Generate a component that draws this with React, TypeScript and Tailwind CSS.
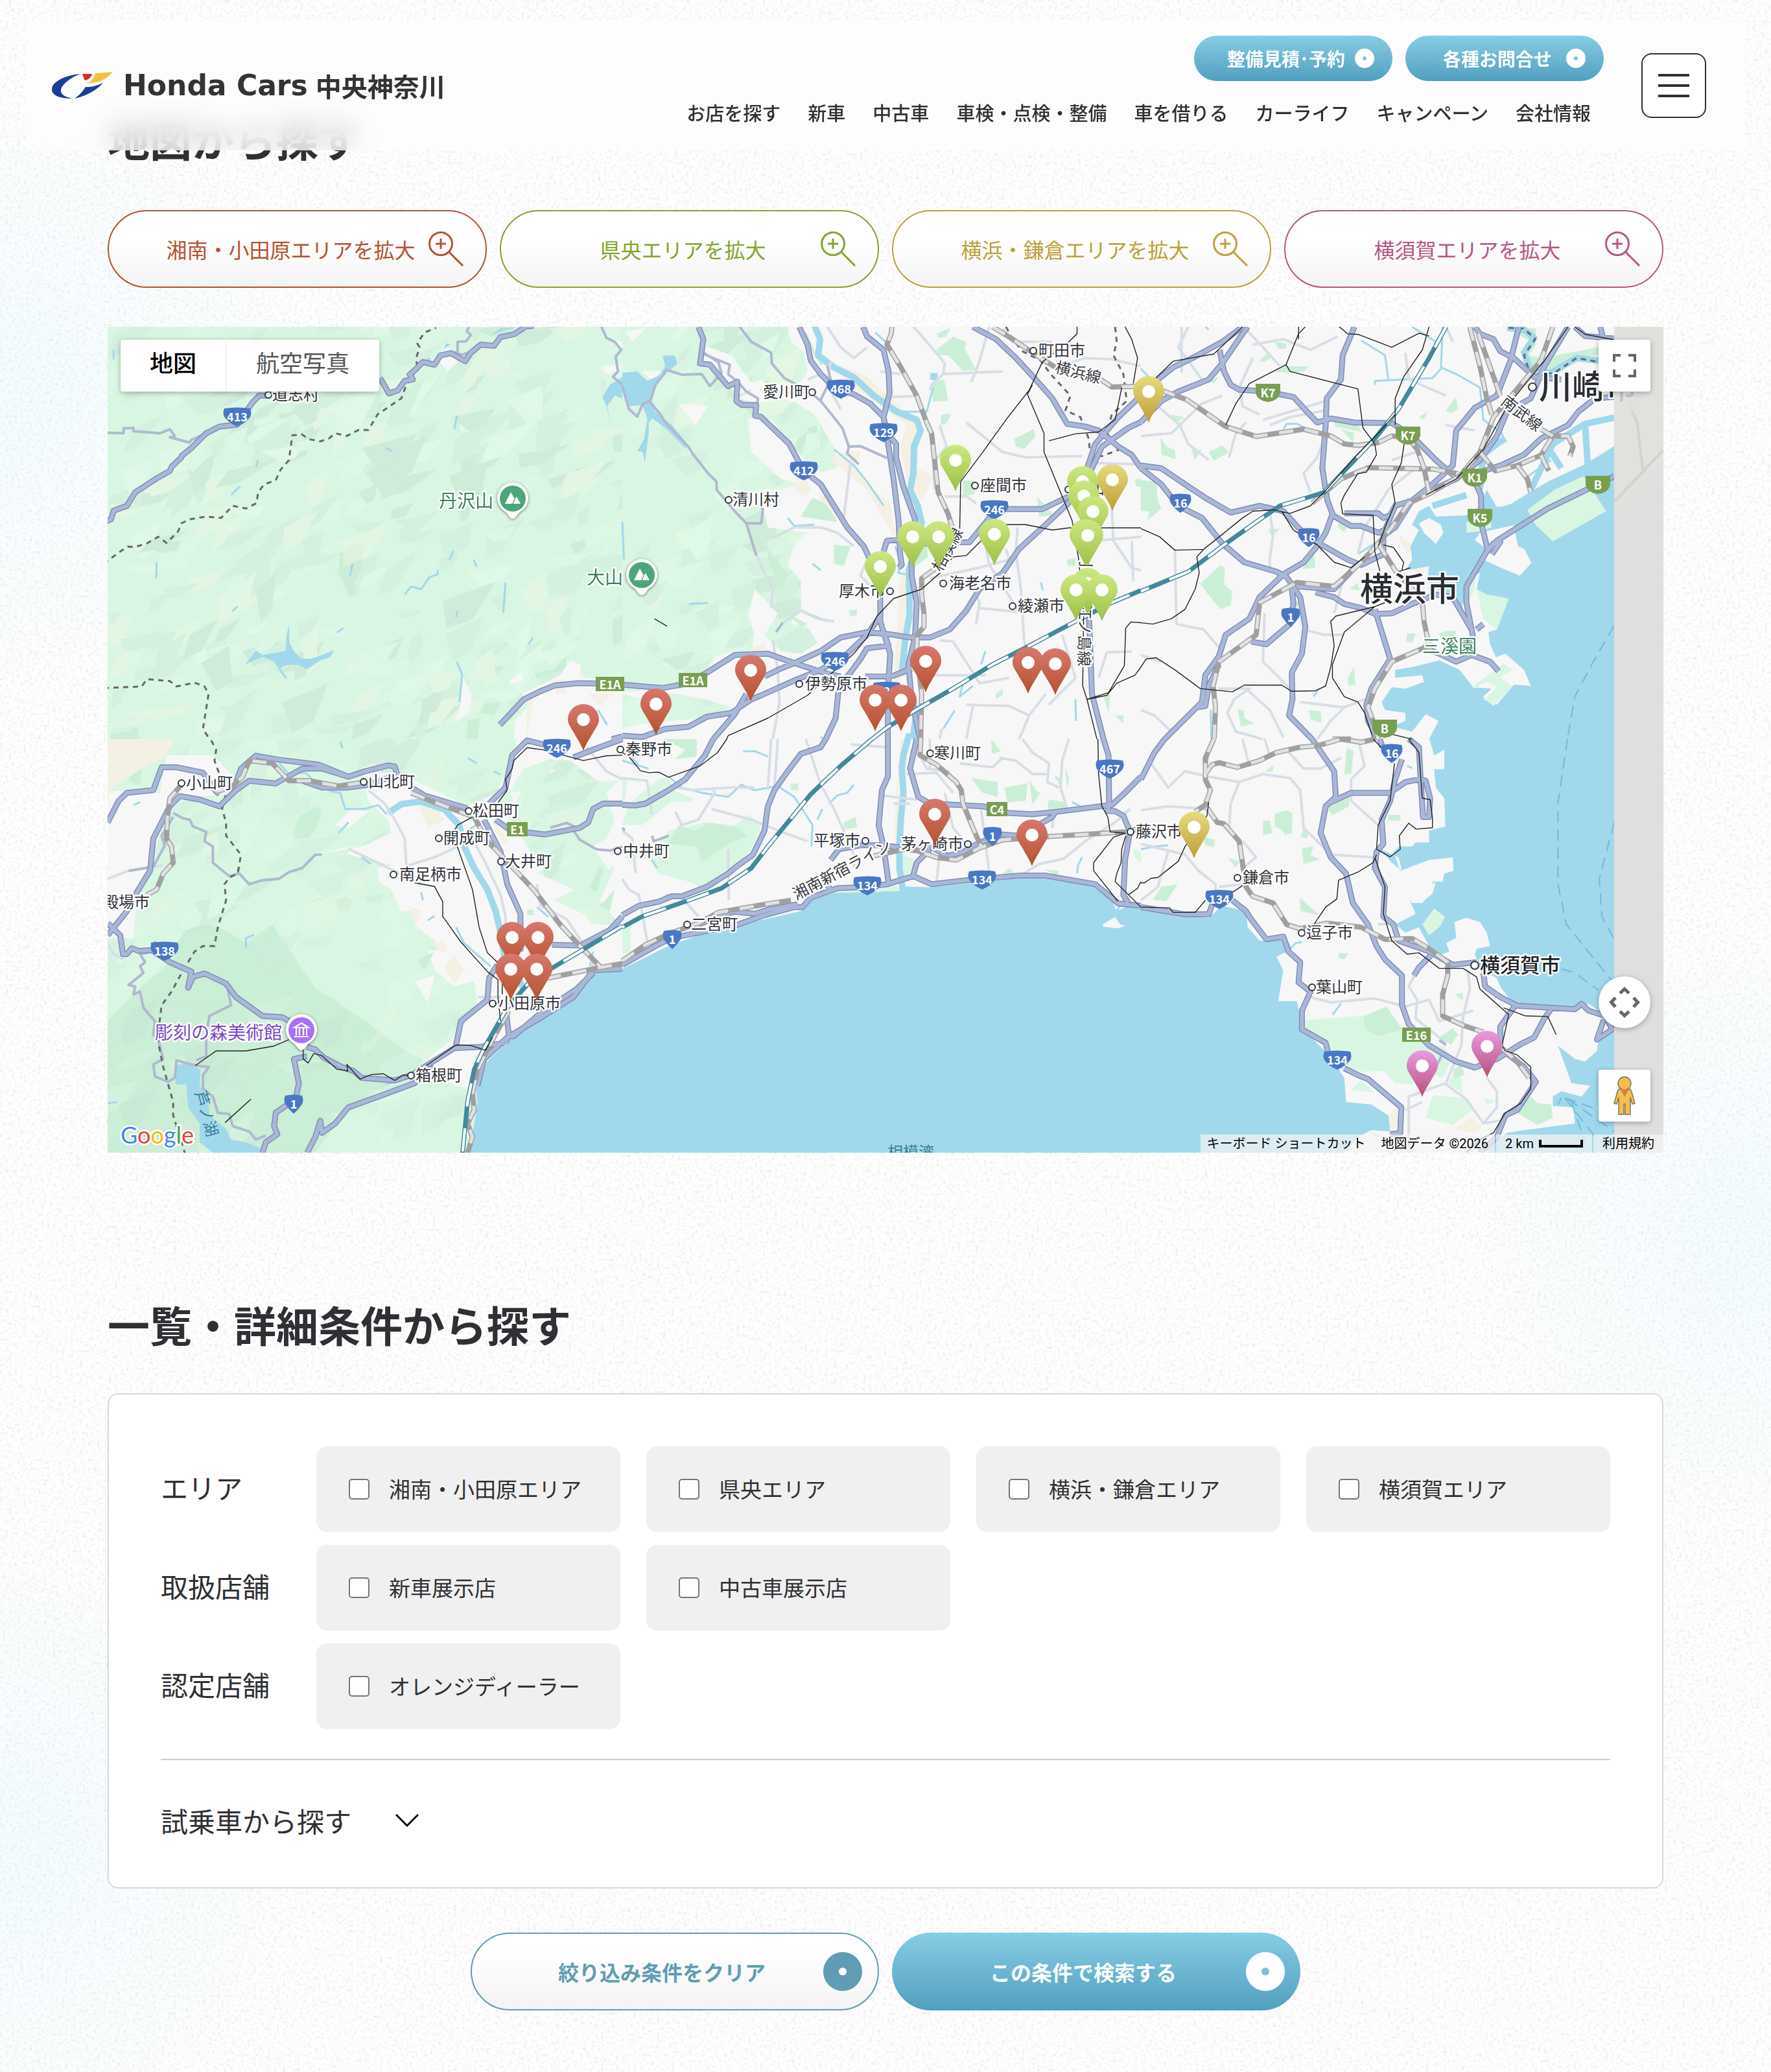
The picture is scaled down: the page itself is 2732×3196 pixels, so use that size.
import { useState } from 'react';
import type { ReactNode } from 'react';

const NAV_ITEMS = [
  'お店を探す',
  '新車',
  '中古車',
  '車検・点検・整備',
  '車を借りる',
  'カーライフ',
  'キャンペーン',
  '会社情報',
];

const AREAS = [
  { label: '湘南・小田原エリアを拡大', style: 'border-[#b4532f] text-[#b4532f]' },
  { label: '県央エリアを拡大', style: 'border-[#83a52e] text-[#83a52e]' },
  { label: '横浜・鎌倉エリアを拡大', style: 'border-[#c09f3c] text-[#c09f3c]' },
  { label: '横須賀エリアを拡大', style: 'border-[#b85585] text-[#b85585]' },
];

const FILTERS = [
  { title: 'エリア', options: ['湘南・小田原エリア', '県央エリア', '横浜・鎌倉エリア', '横須賀エリア'] },
  { title: '取扱店舗', options: ['新車展示店', '中古車展示店'] },
  { title: '認定店舗', options: ['オレンジディーラー'] },
];

const MAP_W = 2400;
const MAP_H = 1274;

interface Tile {
  x: number;
  y: number;
  sx: number;
  hills?: string;
  deep?: string;
  land?: string;
  parks?: string;
  beach?: string;
  sea?: string;
  islands?: string;
  coast?: string;
  river?: string;
  stream?: string;
  minor?: string;
  lane?: string;
  road?: string;
  jr?: string;
  shinkansen?: string;
  rail?: string;
  border?: string;
  ferry?: string;
}

// Vector tiles, 3 columns x 2 rows. Every tile keeps its own units.
const TILES: Tile[] = [
  {
    x: -6, y: -14, sx: 0.5102,
    hills: 'M0,0H1568V1568H0Z',
    deep: 'M755,838 785,850 780,940 755,990 765,1030 745,1035 710,940 715,880Z M1290,1290 1340,1270 1350,1290 1400,1260 1395,1310 1310,1340Z M1150,1420 1180,1415 1200,1430 1180,1480 1140,1470Z M22,1530 100,1520 108,1568 22,1568Z M1100,1500 1138,1490 1130,1568 1098,1568Z',
    land: 'M1240,1568 1245,1500 1290,1440 1265,1400 1380,1330 1410,1275 1440,1290 1445,1340 1568,1350 1568,1568Z M1505,182 1568,175 1568,130 1535,80 1568,90 1568,190 1520,212Z M1020,125 1045,110 1070,165 1040,200 1012,160Z M1085,1335 1112,1400 1108,1460 1060,1510 1082,1430Z M1225,1350 1265,1320 1268,1350 1232,1365Z',
    beach: 'M1280,1420 1300,1405 1290,1500 1280,1560Z M1350,1350 1390,1345 1400,1400 1370,1400Z M1465,1400 1545,1398 1500,1440Z M1440,1310 1460,1340 1440,1340Z',
    sea: 'M428,1290 460,1238 480,1255 505,1250 550,1240 553,1180 560,1145 562,1210 575,1240 595,1268 625,1270 660,1255 697,1238 685,1262 655,1275 615,1308 590,1292 565,1290 545,1295 530,1308 515,1280 480,1262 445,1280Z M1568,220 1530,250 1508,295 1520,330 1535,405 1522,330 1545,290 1568,300Z M950,170 985,148 990,165 960,180Z M1170,66 1200,40 1245,38 1205,48Z M1035,95 1048,100 1030,115Z',
    stream: 'M530,1305 552,1342 M910,1030 930,1000 960,1010 985,965 1010,955 1010,940 M745,960 752,915 M385,660 412,628 M1215,985 1208,1098 M160,910 159,970 M1068,1280 1084,1330 1075,1430 M460,555 467,530 M1060,415 1068,365 M30,120V155 M855,485 870,497 M1045,900 1058,868 M1118,900 1128,928 M388,1092 405,1075 M705,1172 724,1155 M1285,1215 1298,1190 M1065,1115 1070,1092 M1495,1460 1522,1515',
    lane: 'M0,428 60,430 60,412 90,410 90,422 170,430 200,415 215,440 200,445 260,465 265,455 310,430 M1045,140 1070,125 1070,90 1095,88 1110,65 1098,50 1104,34 M1505,34 1520,75 1545,90 1565,120 1548,145 1555,200 1540,220 1568,250 M1060,130 1085,138 1115,125',
    road: 'M0,762 22,750 30,718 70,700 95,650 120,630 160,598 200,570 205,555 235,520 235,515 265,485 310,430 350,405 403,398 430,350 450,315 470,290 500,290 M835,225 848,250 862,282 890,270 910,235 935,230 925,212 945,190 965,165 1000,175 1018,140 1050,132 1093,162 1110,130 1140,100 1180,105 1200,72 1240,62 1275,34 1300,30 M1198,1515 1270,1420 1320,1390 1365,1368 1430,1360 1568,1362 M1536,1568 1568,1558',
    border: 'M0,915 50,870 72,852 95,853 130,840 165,815 190,838 225,795 235,765 260,750 310,740 355,745 390,700 430,710 462,690 467,650 485,620 520,605 535,565 560,530 570,438 600,435 620,452 655,460 680,450 700,430 735,440 770,418 800,418 828,360 870,325 900,300 915,250 948,190 945,150 955,110 948,95 970,55 1005,38 M0,1378 115,1372 130,1345 200,1352 220,1372 275,1358 305,1372 317,1400 300,1530 320,1568',
  },
  {
    x: 794, y: -14, sx: 0.5102,
    hills: 'M0,34 500,34 510,90 550,130 560,200 540,240 420,250 350,300 410,320 480,300 530,320 580,360 640,480 650,560 600,575 560,540 510,470 450,380 400,370 380,380 390,500 480,600 530,620 480,640 410,640 440,780 560,800 520,850 500,920 540,980 540,1080 510,1140 560,1150 590,1210 540,1250 480,1240 430,1180 470,1100 400,1010 380,1110 400,1180 390,1250 340,1240 280,1260 250,1320 180,1380 0,1390Z M0,1400 60,1420 120,1390 250,1420 330,1450 240,1490 60,1510 0,1530Z',
    land: 'M240,100 330,140 400,260 350,290 310,240 250,180Z M10,50 70,40 30,90Z M60,200 120,195 95,240Z M170,320 260,330 220,400Z M380,250 420,230 450,270 400,290Z',
    parks: 'M950,60 992,38 980,70 955,75Z M950,120 1000,70 1040,90 1035,115 1070,195 1030,198 985,140 955,140Z M935,240 970,230 975,240 985,310 940,312Z M1185,450 1243,415 1250,440 1215,488 1190,480Z M1255,668 1305,735 1260,740Z M965,360 995,358 980,395 962,398Z M640,845 690,850 670,925 640,915Z M440,860 500,950 480,1010 440,900Z M540,740 575,670 610,690 625,710 650,760Z M1550,600 1568,600 1568,630 1552,625Z M1030,605 1070,610 1065,655 1030,668Z M1345,900 1372,895 1370,922 1345,922Z M560,410 590,400 590,430 565,430Z M500,1100 560,1140 540,1150Z M685,1090 710,1085 708,1108 688,1110Z M1128,1400 1150,1380 1150,1405 1130,1418Z M1455,1410 1475,1400 1470,1470Z M1490,1480 1515,1480 1515,1510Z M880,850 920,840 925,890 880,930Z M535,40 560,60 590,150 620,160 600,180Z',
    beach: 'M600,130 640,170 730,210 800,285 850,340 905,372 900,420 890,560 940,590 910,680 880,640 860,600 840,480 860,400 780,330 700,260 640,190Z M625,525 680,495 720,500 705,560 760,640 810,690 828,830 740,640Z M595,650 640,690 650,760 600,700Z M520,615 555,605 570,640 550,670 520,640Z M385,1230 430,1215 440,1235 400,1250Z M540,1270 620,1220 600,1260 540,1290Z M840,940 858,940 850,1330 820,1380Z',
    sea: 'M0,205 45,200 75,235 110,215 130,180 122,142 158,140 167,170 145,195 118,208 85,300 100,350 150,400 190,460 195,490 130,410 90,375 80,390 80,430 68,540 62,500 46,495 66,450 76,375 60,325 20,330 15,300 0,260Z M932,205 955,207 950,235 930,230Z',
    river: 'M578,20 598,80 592,140 640,185 700,222 760,290 830,350 890,380 902,420 882,480 880,580 870,640 893,700 905,760 885,870 866,940 868,1040 868,1110 855,1200 845,1330 M880,1420 888,1480 878,1568',
    stream: 'M640,490 700,550 740,610 790,700 M0,760 5,900 M765,55 800,95 M500,745 520,775 580,770 M600,1560 605,1565 M835,350 920,350 940,260 M825,850 840,900 835,950 860,955 M1085,1290 1098,1240 M1030,1360 1020,1410 1060,1370 M1265,985 1272,1015 M1370,1420 1372,1500 M970,1530 1005,1462 M540,1090 600,1120 620,1130 M575,915 600,940 M202,1065 260,1062',
    minor: 'M620,34 660,110 700,150 740,110 M780,200 840,210 M815,295 885,292 M1110,34 1075,180 1055,240 M970,210 1150,200 M930,270 935,250 970,210 975,170 900,60 880,34 M960,400 980,480 940,540 945,640 M1040,390 1090,440 1150,500 1220,520 1390,515 M975,665 1040,665 1070,690 M1300,90 1180,90 1150,40 M1350,170 1400,150 1480,155 1568,180 M660,340 620,250 630,160 M600,210 560,230 M930,970 1080,930 1170,900 1160,860 M1095,830 1110,920 1200,1095 M1195,780 1190,870 1205,1010 1215,1200 1240,1340 M1075,1080 1200,1095 M1060,1000 1080,1060 1070,1140 M455,820 520,780 600,780 650,800 700,850 M405,880 430,950 455,1010 450,1080 M480,1140 540,1090 590,1120 640,1130 M455,1200 470,1310 475,1430 455,1568 M960,1200 1000,1205 1060,1320 1080,1360 1170,1340 M930,1330 1100,1330 M1040,1440 1170,1445 1230,1480 1280,1400 M1230,1480 1200,1568 M1430,830 1568,815 M1485,560 1480,700 1485,830 1540,930 1568,940 M1400,540 1568,545 M1440,1340 1465,1245 1540,1242 M1060,1445 1040,1568 M690,540 680,640 670,740 M965,1530 960,1568 M1540,830 1545,980 M760,1010 720,960 740,900 M1290,1440 1370,1340 1330,1180',
    lane: 'M0,255 20,340 45,368 62,320 85,310 100,250 135,195 180,212 240,210 265,255 300,205 290,165 245,130 M85,315 115,360 130,390 200,480 215,510 260,580 285,610 285,640 340,720 375,765 405,885 M375,765 420,765 425,715 415,690 M355,34 390,90 450,130 452,170 490,225 560,270 600,310 665,410 685,480 680,505 715,545 M685,480 720,478 800,522 M245,135 295,160 325,175 320,210 350,240 375,275 410,300 408,330 M600,305 630,230 620,180 M465,1170 485,1135',
    road: 'M230,34 245,80 235,170 265,175 320,255 348,238 345,310 362,325 405,325 402,365 418,368 505,470 548,570 600,620 640,700 680,780 730,850 780,980 780,1130 790,1170 805,1220 740,1230 720,1270 690,1320 655,1370 645,1490 615,1568 M535,34 560,100 570,160 600,210 640,260 700,285 750,320 790,370 800,430 828,470 828,520 850,630 885,750 875,870 875,960 890,1060 885,1190 865,1290 875,1420 900,1568 M728,34 740,70 790,120 805,200 808,280 790,370 805,480 820,600 835,750 840,880 845,920 835,930 M790,1170 810,1250 803,1390 803,1568 M0,1365 120,1378 180,1365 250,1325 340,1255 440,1250 520,1285 620,1325 660,1335 M430,1335 480,1305 520,1285 600,1240 660,1190 740,1170 810,1178 870,1190 930,1190 990,1160 1040,1090 1080,1010 1150,950 1200,860 1280,770 1340,700 1390,640 1450,480 1530,410 1568,388 M0,1555 60,1560 130,1530 200,1522 255,1485 330,1470 390,1420 420,1405 520,1350 600,1310 680,1250 740,1180 780,1110 M790,870 800,830 840,825 900,840 1050,835 1100,760 1130,712 1270,712 1350,665 M275,1568 340,1475 375,1400 M735,1335 820,1332 875,1305 M1060,34 1130,80 1190,150 1250,230 1300,300 1345,395 1400,405 1440,420 1500,480 1540,510 1568,560 M1400,580 1430,470 1500,370 1568,290 M1410,1090 1415,1230 1420,1400 1455,1568',
    jr: 'M815,34 813,60 800,100 840,180 890,290 920,390 935,430 945,540 955,650 985,730 1000,790 M945,935 905,970 905,1030 912,1100 912,1150 892,1180 890,1240 905,1400 902,1568 M1120,34 1180,80 1270,155 1310,185 M1440,225 1480,258 1568,255',
    shinkansen: 'M755,1568 800,1525 880,1465 1000,1380 1120,1290 1240,1215 1370,1130 1480,1060 1568,1015',
    rail: 'M320,1555 440,1490 560,1405 640,1315 700,1250 740,1190 770,1110 820,1045 905,1010 960,950 1000,890 1040,885 1085,830 1130,770 1220,770 1300,790 1350,782 1568,782 M1020,800 1023,610 1090,500 1160,380 1230,270 1270,165 1350,90 1375,60 1375,34 M1290,458 1370,432 1440,425 1490,380 1510,260 M1240,250 1225,285 1275,430 1275,500 1360,755 1380,900 1395,1100 1392,1370 1405,1420 1435,1568 M1520,34 1540,80 1558,150 1545,245 M1568,1135 1538,1132 1522,1155 1518,1295 1470,1395 1405,1420 1465,1405 1495,1360 1550,1330 1568,1300 M97,1120 135,1148 M320,1555 315,1568',
    border: 'M1160,34 1180,80 1210,125 1265,160 1295,210 1355,290 1340,345 1385,370 1410,450 1415,510 1450,515 1505,490 1465,430 1480,360 1525,310 1515,210 1485,140 1495,90 1490,34',
  },
  {
    x: 1594, y: -14, sx: 0.523,
    parks: 'M0,605 45,610 50,680 60,710 20,755 25,720 0,720Z M58,445 75,480 100,492 102,525 60,510Z M200,500 240,475 260,500 215,533Z M175,990 235,920 248,930 245,990 270,1020 265,1070 235,1085 205,1040Z M570,385 640,395 650,425 600,412 572,405Z M590,415 630,428 625,462Z M898,348 930,295 935,340 915,355Z M475,935 510,880 515,930Z M610,1340 628,1300 633,1365 612,1370Z M285,1458 303,1460 305,1490 335,1510 295,1522Z M495,1460 530,1465 533,1508 500,1495Z M385,200 430,180 495,182 480,200 430,205Z M395,90 430,95 428,115 405,115Z M785,1175 810,1175 800,1210 783,1205Z M350,160 375,130 383,150 362,165Z M88,360 128,370 105,392Z M148,490 180,492 160,530Z M375,785 412,785 385,812Z M820,370 845,350 835,380Z M200,235 230,220 215,245Z M585,750 618,765 600,798 580,780Z M615,1010 640,985 645,1015Z M450,1060 475,1055 460,1080Z M878,1175 900,1165 930,1165 925,1190 890,1195Z M1140,140 1180,150 1350,110 1350,140 1280,145 1200,210 1150,180Z M1080,38 1165,40 1165,100 1140,150 1150,90Z',
    beach: 'M762,810 795,840 795,880 770,850Z M800,895 830,900 828,955 800,935Z M845,760 890,770 870,810Z M1155,190 1240,195 1200,225 1150,210Z',
    sea: 'M1396,478 1310,545 1200,610 1095,690 1050,705 1020,640 1000,700 960,735 870,740 850,700 820,720 800,770 820,790 795,850 800,900 780,940 850,925 845,980 900,1040 945,1090 960,1010 975,960 1000,950 990,1010 1020,1030 1085,1045 1050,1160 1025,1170 1030,1215 1060,1300 1095,1290 1090,1380 1040,1445 1010,1410 1035,1380 980,1375 940,1310 880,1275 800,1300 750,1310 750,1340 830,1330 835,1355 780,1380 740,1375 710,1430 720,1460 780,1470 780,1500 740,1520 800,1540 840,1475 878,1500 850,1568 1396,1568Z',
    islands: 'M985,828 1000,800 1100,772 1112,850 1130,860 1152,912 1118,960 1060,930 1002,895 1025,865Z M865,690 915,675 925,720 880,728Z M930,668 960,660 965,715 935,722Z M820,765 850,745 885,770 892,800 870,842 835,800Z M1040,600 1075,590 1098,690 1060,705Z M1240,500 1300,440 1310,540 1250,575Z M1325,400 1396,380 1396,470 1330,520Z M990,1290 1075,1250 1130,1310 1150,1370 1100,1365 1050,1440 1010,1420 1050,1350 980,1380Z',
    coast: 'M1140,715 1220,640 1305,590 1372,720 1215,832 1165,772Z M960,760 1030,740 1035,780 1000,795 960,800Z M990,1010 1020,1030 1085,1045 1050,1160 1010,1120Z M965,960 990,945 985,1010 965,1060Z M1070,1285 1095,1310 1060,1340 1095,1370 1040,1445 1015,1420 1050,1375 1020,1355 985,1378 980,1370Z',
    river: 'M1080,38 1130,45 1160,75 1130,130 1150,200 1210,205 1285,150 1350,160 M1000,640 1010,500 1075,450 M1150,640 1215,470 1310,395 1396,372 M1310,395 1318,550 M1210,500 1240,560 M860,700 960,660',
    stream: 'M890,34 885,185 930,210 1000,260 1010,380 1065,430 1070,460 1010,520 M885,190 860,225 690,235 690,250 M650,85 720,140 730,230 M800,34 870,90 M640,880 740,800 M420,415 430,395 460,395 500,420 M0,190 30,230 M510,1410 525,1380 M208,1568 206,1460 M190,34 200,44 M1130,600 1210,530',
    minor: 'M120,34V205 M140,34 110,110 180,230 M310,44 360,110 410,180 M330,100 420,80 500,120 580,70 M330,150 290,260 300,330 350,360 M0,290 60,340 115,400 140,470 200,530 M0,440 90,430 180,320 240,290 M360,380 545,310 M380,400 440,370 545,345 M260,520 280,430 310,390 M380,720 390,810 380,900 380,950 M100,860 105,1140 185,1160 215,1205 240,1240 M545,430 520,520 480,580 500,650 M0,1255 60,1280 M0,1460 40,1480 90,1540 M365,1100 360,1280 400,1330 440,1380 M470,1430 600,1450 660,1420 M230,1380 320,1380 275,1420 255,1470 280,1540 360,1568 M600,1180 540,1180 480,1160 M640,880 660,780 730,640 810,560 M780,130 790,230 900,290 M900,400 985,420 M740,530 810,500 M900,34 920,90 M600,960 570,1100 M310,1380 380,1460 420,1560 M520,1568 560,1500 600,1450',
    road: 'M0,388 60,310 110,275 200,230 240,170 300,60 315,34 M50,230 95,185 160,145 240,90 300,34 M232,120 245,200 265,250 290,268 370,275 450,295 490,350 520,390 560,375 630,390 740,392 800,440 870,530 925,590 M0,550 60,560 130,620 190,670 265,725 350,700 420,720 460,775 495,820 540,850 610,900 650,920 715,880 M0,560 60,620 110,700 180,745 240,840 305,910 400,945 430,965 470,1040 485,1150 475,1250 445,1320 447,1420 437,1480 505,1568 M630,34 595,140 590,230 548,300 545,400 535,560 550,680 565,730 545,800 520,850 480,910 420,955 350,1040 320,1120 250,1180 230,1260 190,1330 180,1430 70,1568 M565,735 620,775 650,775 700,800 720,790 750,700 800,680 860,620 920,550 930,420 985,335 1050,290 1090,160 1115,34 M1260,34 1190,180 1150,300 1080,350 1050,440 1000,530 930,600 860,640 800,680 750,780 715,810 715,880 M985,34 1000,60 1040,80 1060,125 1100,150 1160,220 1240,230 M1396,590 1200,710 1050,830 1020,870 960,1000 960,1060 980,1190 M990,1160 1010,1140 M1000,575 1060,550 1130,510 1180,450 1260,400 1290,350 1340,300 1396,295 M985,610 1003,660 1005,770 1022,860 M600,728 700,728 715,745 735,735 755,690 M515,1022 570,1040 600,1065 650,1080 690,1102 740,1100 800,1065 870,1030 920,1040 975,1160 M690,1085 735,1270 680,1380 665,1440 670,1500 700,1568 M830,1225 880,1250 930,1280 975,1255 1030,1280 1055,1315 M460,1000 570,1010 630,930 M325,1205 370,1215 440,1140 450,1060 445,1010 M230,1290 200,1370 190,1445 165,1450 M1280,34 1310,68 1396,78 M1355,34 1362,70 M1020,870 1040,840 1060,835 1035,880',
    jr: 'M60,270 135,305 250,405 340,442 480,415 560,440 600,470 640,475 700,465 740,440 790,450 815,490 835,560 850,650 M505,690 590,600 670,558 860,563 935,580 M1215,34 1180,160 1100,280 1040,370 1000,500 940,590 850,655 790,690 740,780 700,840 650,910 570,1000 460,985 350,1060 340,1180 230,1280 213,1370 220,1450 216,1568 M970,34 1000,180 1020,300 1035,360 M995,60 1060,290 M1000,500 1045,570 1110,550 1180,512 1215,440 1260,440 1275,480 1265,515 M1110,550 1140,600 1150,650 M1180,512 1203,570 M700,840 750,940 830,1050 835,1130 850,1220 740,1280 690,1380 670,1450 690,1520 700,1568 M1180,415 1215,440 M565,1568 620,1568',
    shinkansen: 'M900,34 850,150 760,340 690,450 600,570 540,650 490,670 410,700 340,760 240,850 140,945 0,1018',
    rail: 'M485,34 465,60 428,175 320,245 280,320 250,400 M428,175 440,200 640,265 655,410 690,470 695,510 665,575 640,580 600,660 590,690 595,730 685,735 690,870 710,970 M465,34V80 M850,34 830,120 775,220 750,300 750,400 M780,440 768,540 740,620 750,690 720,780 700,850 M0,785 55,815 100,865 185,862 300,745 330,720 390,715 440,728 500,700 540,650 630,520 700,430 750,360 M415,720 450,790 520,845 570,910 620,930 660,890 M185,862 165,890 172,950 160,1010 130,1085 90,1120 35,1140 0,1135 M0,1300 15,1270 45,1265 100,1310 175,1380 270,1392 305,1367 415,1367 445,1390 515,1388 545,1370 560,1300 570,1220 560,1130 575,1110 690,1075 720,1060 M715,845 745,855 775,910 770,940 M690,1075 600,1170 565,1290 565,1340 600,1410 640,1430 660,1470 685,1568 M35,235 95,162 215,135 300,34 M585,34 610,60 640,62 740,110 820,58 850,68 M1260,34 1190,160 1080,330 1010,490 930,600 840,660 M760,945 795,930 M1280,34 1310,62 1396,82 M740,1550 800,1568',
    border: 'M1085,38 1130,40 1163,80 1130,140 1150,215 1220,205 1285,150 1350,165',
    ferry: 'M1396,1145 1330,1290 1280,1410 1258,1568',
  },
  {
    x: -6, y: 636, sx: 0.5102,
    hills: 'M0,0H1568V1539H0Z',
    deep: 'M12,1539V1050L130,900 180,860 240,720 300,690 350,700 430,760 510,690 640,930 700,970 800,1060 900,1150 960,1190 940,1290 830,1310 740,1370 640,1539Z M570,370 590,290 640,250 660,270 650,310 620,370Z M700,600 730,585 755,600 740,640 710,640Z M75,150 115,100 110,180Z',
    land: 'M12,190 170,200 190,60 330,60 400,150 370,200 230,230 180,300 160,400 100,590 90,740 12,740Z M780,120 900,130 1000,190 1100,250 1190,200 1240,60 1250,0 1568,0 1568,150 1500,160 1410,80 1350,75 1270,110 1230,190 1190,220 1230,300 1290,420 1330,480 1310,500 1425,560 1360,600 1450,650 1480,690 1540,690 1568,640 1568,860 1120,1180 1110,1300 1060,1290 970,1200 1050,1120 1130,1000 1120,900 1060,920 1000,860 980,790 1030,780 940,690 960,640 900,640 870,560 830,530 830,480 880,470 740,430 740,400 640,430 780,400 870,350 860,300 800,230Z M700,320 750,260 800,270 740,330Z M1230,200 1265,195 1240,240Z M1475,400 1568,340 1530,490Z M1400,0 1500,0 1450,10Z M940,900 1000,880 980,980Z M1568,140 1568,700 1500,600 1545,480 1500,430 1545,300 1520,200Z',
    beach: 'M12,0 215,0 180,70 130,100 60,150 25,185 12,230Z M780,105 820,90 830,120Z M950,235 1010,260 1030,300 980,330Z M1110,470 1150,520 1180,600 1200,680 1150,560Z M1000,760 1030,750 1040,790 1010,790Z M1030,850 1060,800 1090,860 1060,910Z M1350,110 1370,115 1350,130Z M1170,290 1225,380 1210,400Z M920,620 960,640 945,690Z',
    parks: 'M1280,635H1300V655H1280Z M790,1040 830,1090 800,1130 760,1110Z M1500,620 1545,560 1530,640Z M1470,550 1500,470 1510,490 1490,570Z M950,820 1000,790 970,860Z',
    sea: 'M1568,850 1480,870 1410,970 1330,1030 1230,1110 1160,1200 1125,1290 1130,1350 1108,1539 1568,1539Z M215,1215 250,1205 292,1230 290,1290 315,1330 320,1400 370,1450 385,1490 430,1500 470,1520 480,1539 330,1539 290,1500 290,1430 255,1370 250,1285 218,1285Z',
    river: 'M860,275 900,242 960,232 1030,262 1075,320 1090,400 1120,480 1160,560 1185,640 1200,720 1210,800 1270,930',
    stream: 'M530,90 560,130 610,125 640,160 690,195 715,200 730,260 790,260 830,245 855,280 M1100,340 1140,310 M1065,700 1090,760 1170,845 M430,780 430,740 455,728 M90,245 110,235 M1310,625 1345,662 M710,350 740,310 M780,440 808,465 M980,675 1000,658 M960,570 965,600 M1100,70 1128,90 M1180,120 1200,132 M12,1355 40,1350 M715,10 722,35 M850,1285 880,1275 M1470,845 1480,790',
    minor: 'M12,520 75,490 180,470 M800,190 850,240 880,300 910,370 915,470 M740,408 870,485 960,540 M920,470 1000,440 1070,400 M1100,340 1150,450 1200,580 1215,660 1215,780 M1310,540 1320,620 1400,670 1470,800 1480,850 M1460,30 1520,120 1568,150 M1130,960H1200 M12,760 30,800 60,820',
    lane: 'M210,275 240,295 260,300 270,325 310,345 305,380 330,400 330,460 380,510 410,500 440,540 480,525 530,520 560,495 600,480 640,430 660,430 M210,290 175,360 185,400 M150,790 110,800 125,830 110,845 120,870 75,915 95,920 90,950 110,940 120,1000 155,1050 150,1100 165,1120 180,1190 150,1210 155,1255 195,1275 215,1260 220,1195 280,1215 318,1220 300,1250 300,1300 330,1330 345,1390 380,1395 390,1440 440,1460 460,1490 490,1475 M375,930 385,990 320,1030 310,1090 310,1180 280,1195 M1420,340 1440,375 1490,410 1530,415 1568,400 M1350,330 1400,312 1430,330 M75,490 150,475 185,395 180,370 M410,475 405,500',
    road: 'M12,310 45,230 70,200 150,190 175,105 220,105 300,125 340,195 350,205 M400,160 415,110 460,62 520,75 650,95 740,140 790,120 860,98 880,102 890,140 M930,180 970,210 1100,258 M1165,240 1215,180 1235,60 1280,5 1330,20 M1420,68 1500,30 1568,0 M12,730 70,640 100,570 140,490 150,370 200,250 230,212 290,225 350,250 400,190 440,155 520,165 600,110 660,110 740,140 M600,155 660,180 740,180 800,170 870,140 M1185,300 1230,340 1335,355 1440,330 1465,310 1480,260 1510,240 1568,240 M1150,300 1200,420 1220,540 1260,650 1260,790 M1355,765 1440,768 1530,710 1568,660 M12,685 50,730 58,800 70,800 85,778 105,788 145,785 200,830 265,865 255,925 270,885 305,872 370,910 400,960 480,1030 540,1035 570,1055 M615,1145 640,1155 665,1185 720,1220 755,1235 780,1260 880,1270 930,1250 1060,1150 1140,1145 1210,1130 M615,1180 575,1190 590,1280 580,1340 520,1390 515,1440 525,1470 490,1500 480,1539 M1000,1220 940,1280 830,1330 740,1370 700,1430 660,1465 655,1420 640,1480 615,1539 M1568,855 1480,860 1420,960 1330,1030 1220,1110 1150,1190 1130,1290 M1190,840 1165,890 1160,970 1080,1050 1065,1140 M1215,1000 1225,1100 1215,1130 M1220,1105 1240,1105 1330,1010 1430,930 1480,870 M150,755 158,785',
    jr: 'M130,580 160,560 180,500 210,460 205,400 190,370 192,300 200,220 235,170 M340,195 385,180 420,140 440,80 510,90 560,155 620,155 710,175 790,160 M930,200 1000,235 1120,290 1160,380 1200,430 1300,560 1380,690 1440,770 1500,845 M1340,890 1500,850 1568,835 M1225,1010 1170,1130 1130,1230 1115,1320 1120,1380 1100,1430 1115,1480 1100,1539',
    shinkansen: 'M1568,695 1440,790 1290,900 1220,1000 1150,1150 1120,1230 1100,1350 1085,1539',
    rail: 'M1115,290 1070,320 1055,350 1115,560 1135,700 1160,795 1190,830 1205,870 1205,950 M940,535 1000,548 1025,605 1025,660 1080,755 1160,865 1192,895 1192,960 1200,1050 M975,1215 1065,1138 1110,1140 1155,1158 1175,1110 M603,1155 603,1190 618,1205 635,1170 660,1178 705,1228 738,1235 735,1210 775,1265 810,1248 845,1245 880,1270 905,1250 930,1252 M277,1215 340,1160 430,1160 515,1142 560,1118 M367,1427 445,1340 M1568,60 1520,62 1450,80 1390,60 1330,40 1280,32 1240,80 1235,110 1215,150 1220,190 1190,240',
    border: 'M325,5 340,40 335,80 348,125 370,200 358,260 370,310 370,360 415,430 405,500 380,515 365,540 370,600 345,700 335,770 300,770 275,790 240,860 205,940 175,990 168,1060 165,1130 180,1220 210,1350 210,1400 245,1539',
  },
  {
    x: 794, y: 636, sx: 0.5102,
    parks: 'M120,0H225V65L160,75 190,40Z M670,310 705,290 710,330 668,335Z M1055,145 1135,160 1135,215 1090,200 1070,170Z M1155,180 1225,165 1220,230 1165,235Z M1230,150 1250,190 1265,200 1240,245Z M1290,225 1340,235 1345,258 1285,260Z M1115,0 1145,45 1118,55Z M1150,500 1170,480 1190,505Z M1275,485 1320,490 1315,508Z M510,165H532V190H510Z M140,390 170,320 220,340 260,310 350,330 380,360 320,390 240,460 225,400Z M1305,135 1325,145 1325,175Z M1338,105 1352,145 1345,185Z',
    coast: 'M0,150 15,150 10,210 0,260Z M20,240 110,150 135,140 160,195 215,220 210,232 150,232 60,320 0,320Z M0,440 80,445 110,500 200,530 260,565 330,500 390,410 420,330 385,280 340,320 250,310 140,340 100,400Z M0,700 25,690 25,790 0,800Z M640,568 830,545 840,565 650,572Z M1410,535 1450,550 1500,610 1480,605Z M845,430 880,445 880,480 850,520Z M1545,410 1568,420V460L1548,440Z',
    beach: 'M842,0 860,0 835,120 835,250 830,400 822,400 828,200Z M290,205 330,195 315,220Z',
    sea: 'M0,855 130,775 250,720 340,695 540,640 570,600 640,572 780,568 840,558 850,548 930,552 1060,535 1200,518 1290,515 1430,545 1480,600 1495,640 1530,620 1568,628 1568,1539 0,1539Z',
    islands: 'M1452,690 1490,662 1505,690 1522,694 1500,704 1455,698Z',
    river: 'M868,-20 850,60 845,110 850,200 842,300 838,400 838,480 848,560',
    stream: 'M140,140 180,180 240,200 320,215 360,170 400,190 470,175 520,215 575,320 572,400 M590,300 605,260 M625,240 650,210 680,200 700,170 M365,45 400,45 440,65 M0,80 80,110 M1360,235 1385,250 M1375,500 1378,470 1390,440 M1495,640 1515,600 M90,450 105,480 M50,100 30,70',
    minor: 'M450,0 440,190 M160,180 210,190 330,180 400,180 M430,320 470,340 560,380 M555,0 600,170 640,260 680,370 700,430 700,480 M690,20 800,30 M780,210 890,225 M870,45 900,60 920,110 990,120 M930,0 930,110 M975,200 1000,330 1040,390 M1085,260 1110,500 M1210,0 1240,50 1290,90 1285,160 1320,180 M1150,70 1120,105 1020,90 M1285,130 1240,130 1190,80 1140,70 M1350,0 1330,80 1325,180 1345,260 M1215,500 1260,465 1335,445 1400,380 1490,310 1535,260 M1300,330 1305,260 M960,420 950,530 M320,410 322,600 M160,270 180,320 230,300 280,200 270,180 M0,145 75,155 90,280 M0,340 30,370 40,500 M0,520 20,560 50,580 75,750 M270,260 330,280 390,300 430,320 M860,130 950,125 1000,200 M870,240 820,240 M230,660 180,590 130,580 M470,0 460,180',
    lane: 'M0,330 8,340 M90,360 95,380 140,360',
    road: 'M615,0 600,30 540,55 500,120 460,190 440,250 430,340 395,430 350,470 320,500 255,550 180,585 150,585 110,605 50,620 0,655 M275,0 250,60 190,150 140,190 70,240 40,247 0,245 M803,0 803,140 785,190 775,320 790,400 805,535 M890,0 870,110 895,215 930,240 1010,245 1090,250 1170,275 1240,280 1330,268 1480,245 1520,200 1568,140 M0,840 100,770 150,740 250,715 350,690 430,655 520,625 545,625 570,590 650,555 740,550 800,540 880,510 935,540 1040,525 1200,508 1280,508 1430,540 1500,612 1568,620 M230,690 300,655 340,642 400,650 440,635 530,615 M630,450 655,410 720,395 780,395 860,405 930,400 985,435 1030,420 1080,385 1150,355 1200,360 1300,290 1310,270 M880,505 890,460 930,410 M1455,0 1470,60 1472,240 1468,268 1490,268 1515,285 1535,345 1520,450 1515,580 1530,610 M615,535 630,560',
    jr: 'M0,825 70,765 150,720 230,685 290,645 430,615 510,600 M760,435 850,410 890,415 950,440 1010,450 1080,405 1150,375 1300,362 1530,345 1568,330 M903,-5 900,60 950,95 1010,160 1025,190 1030,240 1060,330 1085,400',
    shinkansen: 'M755,0 660,100 570,205 500,310 440,400 390,480 300,555 200,600 60,660 0,700',
    rail: 'M0,50 20,65 55,118 80,125 110,123 140,142 235,100 288,50 316,0 M1438,0 1440,130 1450,250 1468,290 1475,345 1520,350 1485,365 1425,460 1425,490 1498,603 M1522,360 1510,410 1508,460 1495,500 1490,530 1568,625 M1530,580 1558,555 1568,530',
  },
  {
    x: 1594, y: 636, sx: 0.523,
    parks: 'M360,305 380,303 388,350 360,357Z M395,278 430,265 447,275 445,350 425,357 412,335 395,325Z M470,365 482,325 495,345 490,370Z M550,262 560,240 615,210 615,250 565,282Z M475,405 510,400 500,430 528,448 480,465Z M600,130 608,30 628,45 620,130Z M730,282 765,282 765,303 730,303Z M470,590 525,655 470,640Z M60,550 108,540 75,603 35,598Z M255,440 290,455 280,478Z M185,362 218,375 215,403 190,395Z M585,795 612,798 600,820 583,815Z M925,950 950,945 950,972Z M880,1110 920,1075 935,1100 915,1138Z M1110,1360 1150,1330 1170,1355 1210,1360 1215,1410 1170,1435 1115,1395Z M655,1035 725,995 770,1080 700,1105 665,1080Z M920,1230 945,1210 955,1250 925,1262Z M365,120 390,98 390,122Z',
    coast: 'M485,1045 655,1030 725,995 770,1090 900,1150 915,1200 890,1260 840,1235 800,1285 750,1280 715,1235 600,1240 540,1140 480,1080Z M620,1305 650,1270 690,1315Z M860,1325 950,1335 985,1375 920,1435 840,1410Z M905,1280 940,1210 950,1320Z M1010,1335 1045,1345 1020,1362Z M680,1460 720,1485 700,1500Z M830,690 865,630 897,662 880,700 850,730Z',
    beach: 'M920,1450 975,1410 1005,1440 985,1465Z M730,1400 755,1370 760,1440 735,1460Z',
    sea: 'M850,-4 865,60 895,40 895,112 865,112 870,180 895,220 898,325 850,340 850,385 810,385 800,400 760,400 745,420 765,490 850,450 920,440 922,490 895,500 890,530 860,530 860,565 830,610 800,610 790,590 810,650 750,690 780,720 820,700 850,770 870,810 910,790 900,760 930,740 925,680 960,665 1000,680 1020,720 1030,770 990,780 985,800 1000,850 1050,890 1060,920 1100,990 1280,1000 1320,985 1375,1030 1390,1080 1350,1120 1345,1160 1310,1200 1280,1190 1230,1140 1270,1280 1325,1290 1300,1330 1240,1310 1215,1330 1215,1365 1275,1370 1280,1430 1130,1455 1080,1465 1040,1500 1020,1539 1396,1539 1396,-4Z M0,632 90,645 200,665 240,620 310,640 315,700 350,750 390,750 430,740 445,780 400,810 420,860 405,975 460,975 480,1080 550,1170 600,1260 605,1350 680,1360 730,1400 735,1460 680,1455 640,1480 600,1539 0,1539Z M700,405 760,440 770,490 740,460Z',
    islands: 'M825,610 860,575 870,530 850,550Z',
    stream: 'M565,1025 590,985 M0,410 40,400 80,395 M435,790 455,760 475,755 M205,10 195,90 M785,100 800,108',
    minor: 'M30,90 80,180 130,120 200,140 290,160 360,130 440,145 470,190 480,330 560,430 690,440 M290,160 265,240 260,330 M300,0 320,100 M430,40 480,110 530,110 590,70 M0,265 80,250 190,260 M640,0 660,100 620,150 620,230 700,320 M0,600 50,550 80,420 M0,390 130,430 170,490 220,540V600 M300,480 340,440 300,380 M500,960 560,980 690,965 780,995 850,970 880,1050 980,1010 M815,860 790,920 815,970 810,1040 900,1130 M950,1040 945,1140 900,1280 790,1330 790,1539 M895,1280 960,1340 1010,1430 1050,1370 1050,1310 1020,1260 M1010,1430 1080,1415 M230,550 300,540 M780,1380 830,1350 M965,860 970,930 945,1060 M700,690 745,685 M365,0 380,60',
    lane: 'M880,1120 900,1138 M870,1220 890,1170',
    road: 'M505,0 570,120 575,215 545,250 530,350 560,440 605,500 625,610 670,690 695,770 720,820 770,880 770,990 790,1060 850,1140 930,1200 985,1222 1050,1190 1120,1135 1160,1110 1190,1040 1215,995 M560,235 620,200 735,200 780,160 820,150 M705,0 712,30 M770,75 750,150 735,230 710,300 715,390 695,420 690,480 720,550 715,660 745,690 760,750 850,790 920,840 990,830 M1010,870 1015,920 1060,960 1110,992 1280,1005 1300,985 1320,1010 1370,1030 1390,1080 1345,1118 1365,1045 M790,0 820,30 825,150 840,155 853,220 850,290 832,290 825,150 M1105,990 1060,1070 1060,1150 1130,1220 1165,1275 1110,1380 1075,1400 1050,1480 1000,1539 M0,625 130,652 200,652 215,600 M270,600 310,640 325,670 370,745 420,735 435,790 470,830 465,905 500,940 475,1010 475,1080 545,1130 555,1180 M600,1225 640,1250 670,1265 768,1370 765,1465 735,1470 M70,0 40,50 0,150 M805,880 820,850 855,805',
    jr: 'M215,0 190,70 190,150 205,190 190,245 160,270 M190,130 210,95 230,88 285,105 350,80 400,50 470,30 520,25 590,0 650,12 690,0 M195,255 225,310 245,315 290,380 297,440 310,550 330,585 390,610 430,690 470,705 550,685 650,700 720,745 800,742 850,780 905,830 905,880 890,950 890,1030 950,1065 1010,1090 M1065,1150 1110,1200 1145,1260',
    rail: 'M200,235 195,285 130,400 110,455 75,490 50,515 30,518 10,535 0,535 M510,690 545,625 578,595 583,525 640,495 685,460 695,430 M685,0 712,35 M748,90 735,230 700,320 695,410 735,438 765,410 762,360 790,313 812,335 860,330 860,295 853,225 830,220 820,50 790,0 M690,440 720,550 715,650 740,750 785,800 820,795 880,853 950,853 990,885 1000,930 1085,1025 1065,1140 1075,1160 1110,1175 1150,1220 1150,1300 1120,1355 1075,1390 1040,1465 1000,1490 960,1539 M1070,1000 1135,1030 1200,1032 1225,1100 M0,625 85,628 95,645 160,645 190,600 M270,570 300,545',
    ferry: 'M1258,0 1230,240 1230,540 1255,690 1396,910 M1396,310 1352,520 1360,660 1396,745 M1240,855 1280,870 1350,935 M1250,1335 1396,1400 M1260,1340 1396,1460 M1250,1335 1340,1480 M1270,1350 1320,1539 M1230,1360 1240,1335',
  },
];

type LabelKind = 'town' | 'city' | 'metro' | 'park' | 'museum' | 'water' | 'line';

interface MapLabel {
  text: string;
  x: number;
  y: number;
  kind?: LabelKind;
  dot?: number;
  turn?: number;
}

// y is the middle of the text, dot is the x of the place's circle
const LABELS: MapLabel[] = [
  { text: '道志村', x: 254, y: 105, dot: 248 },
  { text: '丹沢山', x: 511, y: 269, kind: 'park' },
  { text: '大山', x: 739, y: 387, kind: 'park' },
  { text: '町田市', x: 1436, y: 37, dot: 1428 },
  { text: '愛川町', x: 1011, y: 101, dot: 1087 },
  { text: '清川村', x: 964, y: 267, dot: 958 },
  { text: '座間市', x: 1346, y: 245, dot: 1338 },
  { text: '大和市', x: 1490, y: 251, dot: 1482 },
  { text: '海老名市', x: 1298, y: 396, dot: 1289 },
  { text: '厚木市', x: 1128, y: 408, dot: 1207 },
  { text: '綾瀬市', x: 1404, y: 431, dot: 1396 },
  { text: '伊勢原市', x: 1076, y: 551, dot: 1067 },
  { text: '川崎市', x: 2208, y: 93, dot: 2198, kind: 'metro' },
  { text: '横浜市', x: 1932, y: 405, kind: 'metro' },
  { text: '三溪園', x: 2028, y: 493, kind: 'park' },
  { text: '小山町', x: 121, y: 704, dot: 114 },
  { text: '山北町', x: 402, y: 702, dot: 395 },
  { text: '松田町', x: 563, y: 747, dot: 557 },
  { text: '開成町', x: 518, y: 789, dot: 511 },
  { text: '大井町', x: 613, y: 825, dot: 607 },
  { text: '南足柄市', x: 450, y: 845, dot: 441 },
  { text: '御殿場市', x: -31, y: 888 },
  { text: '小田原市', x: 603, y: 1044, dot: 594 },
  { text: '彫刻の森美術館', x: 73, y: 1089, kind: 'museum' },
  { text: '箱根町', x: 475, y: 1155, dot: 468 },
  { text: '秦野市', x: 799, y: 652, dot: 791 },
  { text: '寒川町', x: 1275, y: 658, dot: 1269 },
  { text: '平塚市', x: 1089, y: 793, dot: 1169 },
  { text: '茅ヶ崎市', x: 1224, y: 798, dot: 1327 },
  { text: '中井町', x: 795, y: 809, dot: 787 },
  { text: '二宮町', x: 900, y: 922, dot: 894 },
  { text: '藤沢市', x: 1586, y: 779, dot: 1578 },
  { text: '鎌倉市', x: 1751, y: 850, dot: 1743 },
  { text: '逗子市', x: 1849, y: 935, dot: 1842 },
  { text: '葉山町', x: 1864, y: 1019, dot: 1858 },
  { text: '横須賀市', x: 2117, y: 985, dot: 2109, kind: 'city' },
  { text: '横浜線', x: 1497, y: 71, kind: 'line', turn: 14 },
  { text: '相模線', x: 1296, y: 344, kind: 'line', turn: -62 },
  { text: '小田急江ノ島線', x: 1507, y: 440, kind: 'line', turn: 91 },
  { text: '南武線', x: 2181, y: 134, kind: 'line', turn: 38 },
  { text: '湘南新宿ライン', x: 1133, y: 838, kind: 'line', turn: -28 },
  { text: '芦ノ湖', x: 152, y: 1214, kind: 'water', turn: 74 },
  { text: '相模湾', x: 1239, y: 1274, kind: 'water', turn: 0 },
];

const LABEL_STYLES: Record<LabelKind, string> = {
  town: 'fill-[#2f3338] text-[24px]',
  city: 'fill-[#1f2328] text-[31px] font-medium',
  metro: 'fill-[#2a2d32] text-[51px] font-medium',
  park: 'fill-[#3c8262] text-[28px]',
  museum: 'fill-[#7a45c8] text-[28px]',
  water: 'fill-[#3a7f95] text-[24px]',
  line: 'fill-[#3b3d42] text-[24px]',
};

const NATIONAL_ROUTES: [string, number, number][] = [
  ['413', 200, 139], ['468', 1131, 96], ['129', 1197, 163], ['412', 1074, 222],
  ['246', 1368, 282], ['246', 1122, 516], ['129', 1202, 562], ['16', 1655, 272],
  ['16', 1853, 325], ['1', 1825, 448], ['246', 693, 650], ['138', 88, 963],
  ['1', 287, 1199], ['467', 1546, 682], ['1', 1365, 786], ['134', 1172, 862],
  ['134', 1349, 853], ['1', 871, 945], ['134', 1715, 883], ['134', 1897, 1131],
  ['16', 1981, 658],
];

const URBAN_ROUTES: [string, number, number][] = [
  ['K7', 1790, 102], ['K7', 2006, 168], ['K1', 2109, 233],
  ['K5', 2117, 295], ['B', 2299, 244], ['B', 1970, 620],
];

const EXPRESSWAYS: [string, number, number][] = [
  ['E1A', 775, 551], ['E1A', 903, 545], ['E1', 632, 775], ['C4', 1372, 744], ['E16', 2019, 1092],
];

const PIN_COLORS = {
  red: ['#d8786f', '#b3522d'],
  green: ['#cde882', '#9cbf46'],
  yellow: ['#e6dc7e', '#be9c38'],
  pink: ['#ea9bdf', '#b5507b'],
};

type PinColor = keyof typeof PIN_COLORS;

const PINS: [PinColor, number, number][] = [
  ['yellow', 1606, 148], ['green', 1308, 254], ['yellow', 1550, 284], ['green', 1504, 287],
  ['green', 1506, 309], ['green', 1520, 333], ['green', 1368, 368], ['green', 1508, 369],
  ['green', 1512, 370], ['green', 1242, 372], ['green', 1282, 372], ['green', 1192, 418],
  ['green', 1512, 444], ['green', 1494, 454], ['green', 1534, 454], ['red', 1262, 564],
  ['red', 1420, 566], ['red', 1462, 568], ['red', 992, 578], ['red', 1184, 624],
  ['red', 1224, 624], ['red', 846, 630], ['red', 734, 654], ['red', 1276, 800],
  ['yellow', 1676, 820], ['red', 1426, 832], ['red', 624, 990], ['red', 664, 990],
  ['red', 622, 1039], ['red', 662, 1039], ['pink', 2128, 1158], ['pink', 2028, 1188],
];

const FACET_COLORS = ['#d0ecdb', '#c7e3d2', '#e4fbec', '#d0ecdb', '#e1f9e9', '#ebf7e3'];

function makeFacets(seed: number, count: number) {
  let s = seed;
  const rnd = () => {
    s = (s * 16807) % 2147483647;
    return s / 2147483647;
  };
  return Array.from({ length: count }, () => {
    const x = rnd() * 1568;
    const y = rnd() * 1568;
    const long = 50 + rnd() * 170;
    const wide = 14 + rnd() * 60;
    const a = -1.45 + rnd() * 0.9;
    const dx = Math.cos(a) * long;
    const dy = Math.sin(a) * long;
    const pts = [
      [x, y],
      [x + dx * 0.4 + wide * 0.5, y + dy * 0.2],
      [x + dx + wide * rnd(), y + dy],
      [x + dx * 0.5 - wide, y + dy * 0.6],
    ];
    return {
      points: pts.map((p) => p.map(Math.round).join(',')).join(' '),
      fill: FACET_COLORS[Math.floor(rnd() * FACET_COLORS.length)],
    };
  });
}

const FACETS: Record<number, ReturnType<typeof makeFacets>> = {
  0: makeFacets(11, 300),
  1: makeFacets(29, 240),
  3: makeFacets(47, 180),
};

function TileLayer({ children }: { children: (tile: Tile, index: number) => ReactNode }) {
  return (
    <>
      {TILES.map((tile, i) => (
        <g key={i} transform={`translate(${tile.x} ${tile.y}) scale(${tile.sx} 0.4146)`}>
          {children(tile, i)}
        </g>
      ))}
    </>
  );
}

function Line({ d, color, width, dash }: { d?: string; color: string; width: number; dash?: string }) {
  if (!d) return null;
  return (
    <path
      d={d}
      fill="none"
      stroke={color}
      strokeWidth={width}
      strokeDasharray={dash}
      strokeLinejoin="round"
      vectorEffect="non-scaling-stroke"
    />
  );
}

function PlaceLabel({ text, x, y, kind = 'town', dot, turn }: MapLabel) {
  const r = kind === 'metro' || kind === 'city' ? 6 : 5;
  return (
    <g>
      {dot !== undefined && <circle cx={dot} cy={y} r={r} fill="#fff" stroke="#33373c" strokeWidth="2" />}
      <text
        x={x}
        y={y}
        dominantBaseline="central"
        textAnchor={turn === undefined ? 'start' : 'middle'}
        transform={turn ? `rotate(${turn} ${x} ${y})` : undefined}
        stroke={kind === 'water' ? 'none' : '#fff'}
        strokeWidth="5"
        strokeLinejoin="round"
        className={`[paint-order:stroke] ${LABEL_STYLES[kind]}`}
      >
        {text}
      </text>
    </g>
  );
}

function RouteText({ text, x, y }: { text: string; x: number; y: number }) {
  return (
    <text
      x={x}
      y={y}
      textAnchor="middle"
      dominantBaseline="central"
      className="fill-white font-['Noto_Sans_CJK_JP',sans-serif] text-[18px] font-bold"
    >
      {text}
    </text>
  );
}

function PoiPin({ x, y, color, children }: { x: number; y: number; color: string; children: ReactNode }) {
  return (
    <g transform={`translate(${x} ${y})`}>
      <path
        d="M0,31C-5,31 -7,24 -12,20A24,24 0 1 1 12,20C7,24 5,31 0,31Z"
        fill="#fff"
        className="drop-shadow-[0_1px_2px_rgba(0,0,0,0.5)]"
      />
      <circle r="20" fill={color} />
      {children}
    </g>
  );
}

function AreaMap() {
  return (
    <svg
      viewBox={`0 0 ${MAP_W} ${MAP_H}`}
      className="block h-auto w-full font-['Roboto','Noto_Sans_CJK_JP',sans-serif]"
      role="img"
      aria-label="店舗地図"
    >
      <defs>
        {TILES.map((tile, i) =>
          tile.hills ? (
            <clipPath key={i} id={`hills-${i}`}>
              <path d={tile.hills} />
            </clipPath>
          ) : null
        )}
      </defs>
      <rect width={MAP_W} height={MAP_H} fill="#f7f7f7" />
      <TileLayer>
        {(tile, i) => (
          <>
            {tile.hills && <path d={tile.hills} fill="#d9f6e3" />}
            {tile.deep && <path d={tile.deep} fill="#caeed6" />}
            {FACETS[i] && (
              <g clipPath={`url(#hills-${i})`} opacity={i === 3 ? 0.35 : 0.55}>
                {FACETS[i].map((f, n) => (
                  <polygon key={n} points={f.points} fill={f.fill} />
                ))}
              </g>
            )}
            <path d={tile.land} fill="#f7f7f7" />
            <path d={tile.beach} fill="#f5f0e4" />
            <path d={tile.sea} fill="#a1d8ec" />
            <path d={tile.islands} fill="#f7f7f7" />
            <path d={tile.coast} fill="#d9f6e3" />
            <path d={tile.parks} fill="#caefd6" />
          </>
        )}
      </TileLayer>
      <TileLayer>
        {(tile) => (
          <>
            <Line d={tile.river} color="#a1d8ec" width={10} />
            <Line d={tile.stream} color="#a1d8ec" width={3} />
            <Line d={tile.ferry} color="#6fbbdb" width={2} dash="18 10" />
            <Line d={tile.minor} color="#d8dee6" width={4} />
            <Line d={tile.lane} color="#b0b9d0" width={4} />
            <Line d={tile.border} color="#66686c" width={3} dash="8 7" />
          </>
        )}
      </TileLayer>
      <TileLayer>{(tile) => <Line d={tile.road} color="#7d8db8" width={9} />}</TileLayer>
      <TileLayer>{(tile) => <Line d={tile.road} color="#aab7d6" width={6} />}</TileLayer>
      <TileLayer>
        {(tile) => (
          <>
            <Line d={tile.jr} color="#a0a0a0" width={8} />
            <Line d={tile.jr} color="#e0e1e3" width={5} dash="22 18" />
            <Line d={tile.shinkansen} color="#43899c" width={7} />
            <Line d={tile.shinkansen} color="#fff" width={4} dash="36 34" />
            <Line d={tile.rail} color="#222" width={1.4} />
          </>
        )}
      </TileLayer>
      <rect x="2324" width="76" height={MAP_H} fill="#dedfde" />
      <path d="M2324,0H2400V210L2350,270 2324,290Z" fill="#e3e1dd" />
      <path d="M2324,270 2400,190M2340,100 2360,150 2368,220" stroke="#d3d2d0" strokeWidth="4" fill="none" />

      {NATIONAL_ROUTES.map(([text, x, y], i) => {
        const w = text.length === 3 ? 22 : text.length === 2 ? 17 : 15;
        return (
          <g key={i}>
            <path
              d={`M${x - w + 2},${y - 13}Q${x},${y - 16} ${x + w - 2},${y - 13}Q${x + w + 1},${y - 6} ${x + w - 2},${y}Q${x + w - 8},${y + 9} ${x},${y + 15}Q${x - w + 8},${y + 9} ${x - w + 2},${y}Q${x - w - 1},${y - 6} ${x - w + 2},${y - 13}Z`}
              fill="#4a77c4"
            />
            <RouteText text={text} x={x} y={y - 1} />
          </g>
        );
      })}
      {URBAN_ROUTES.map(([text, x, y], i) => (
        <g key={i}>
          <path d={`M${x - 19},${y - 14}H${x + 19}V${y}Q${x + 16},${y + 12} ${x},${y + 14}Q${x - 16},${y + 12} ${x - 19},${y}Z`} fill="#789f51" />
          <RouteText text={text} x={x} y={y - 1} />
        </g>
      ))}
      {EXPRESSWAYS.map(([text, x, y], i) => {
        const w = text.length === 3 ? 22 : 16;
        return (
          <g key={i}>
            <rect x={x - w} y={y - 11} width={w * 2} height="22" fill="#789f51" />
            <RouteText text={text} x={x} y={y} />
          </g>
        );
      })}

      {LABELS.map((label) => (
        <PlaceLabel key={label.text} {...label} />
      ))}
      <rect x="2324" y="60" width="50" height="70" fill="#e1e0dd" opacity="0.85" />

      <PoiPin x={625} y={265} color="#4ea578">
        <path d="M-12,8L-3,-10 3,1 6,-3 12,8Z" fill="#fff" />
        <path d="M3,1L0,8" stroke="#4ea578" strokeWidth="1.5" />
      </PoiPin>
      <PoiPin x={824} y={383} color="#4ea578">
        <path d="M-12,8L-3,-10 3,1 6,-3 12,8Z" fill="#fff" />
        <path d="M3,1L0,8" stroke="#4ea578" strokeWidth="1.5" />
      </PoiPin>
      <PoiPin x={299} y={1085} color="#a970f5">
        <path d="M-11,-4L0,-11 11,-4Z M-11,10H11 M-8,-3V8 M-3,-3V8 M3,-3V8 M8,-3V8" fill="none" stroke="#fff" strokeWidth="2.2" />
      </PoiPin>
    </svg>
  );
}

function StorePin({ color, x, y }: { color: PinColor; x: number; y: number }) {
  const [from, to] = PIN_COLORS[color];
  return (
    <button
      aria-label="店舗"
      className="absolute h-[72px] w-12 -translate-x-1/2 -translate-y-full"
      style={{ left: `${(x / MAP_W) * 100}%`, top: `${(y / MAP_H) * 100}%` }}
    >
      <svg viewBox="0 0 48 72" className="block h-full w-full">
        <defs>
          <linearGradient id={`pin-${color}-${x}-${y}`} x1="0" y1="0" x2="0" y2="1">
            <stop offset="0" stopColor={from} />
            <stop offset="1" stopColor={to} />
          </linearGradient>
        </defs>
        <path
          d="M24,72C20,61 14,53 8,42C3,34 0,30 0,23.500A24,23.500 0 0 1 48,23.500C48,30 45,34 40,42C34,53 28,61 24,72Z"
          fill={`url(#pin-${color}-${x}-${y})`}
        />
        <circle cx="24" cy="24" r="10" fill="#fff" />
      </svg>
    </button>
  );
}

function MapControls() {
  const box = 'flex size-20 items-center justify-center bg-white shadow-[0_2px_8px_rgba(0,0,0,0.3)]';
  return (
    <>
      <div className="absolute left-5 top-5 flex h-20 rounded-sm bg-white font-['Roboto','Noto_Sans_CJK_JP',sans-serif] text-[36px] shadow-[0_2px_8px_rgba(0,0,0,0.3)]">
        <button className="px-[45px] pb-1 font-medium text-black">地図</button>
        <button className="border-l border-[#e6e6e6] px-[46px] pb-1 text-[#565656]">航空写真</button>
      </div>
      <button aria-label="全画面ビュー" className={`${box} absolute right-5 top-5 rounded-sm`}>
        <svg viewBox="0 0 18 18" className="size-9" fill="#666">
          <path d="M0,0V6H2V2H6V0ZM16,0H12V2H16V6H18V0ZM16,16H12V18H18V12H16ZM2,12H0V18H6V16H2Z" />
        </svg>
      </button>
      <div className="absolute bottom-12 right-5 flex flex-col gap-16">
        <button aria-label="地図のカメラ コントロール" className={`${box} rounded-full`}>
          <svg viewBox="0 0 48 48" className="size-12" fill="none" stroke="#666" strokeWidth="5">
            <path d="M17,10L24,3.500 31,10M17,38L24,44.500 31,38M10,17L3.500,24 10,31M38,17L44.500,24 38,31" />
          </svg>
        </button>
        <button aria-label="ストリートビュー" className={`${box} rounded-sm`}>
          <svg viewBox="0 0 34 60" className="h-[60px] w-[34px]">
            <g fill="#f4be4b" stroke="#77705f" strokeWidth="1.4">
              <path d="M8,20H26L28,24 33,42 29,43 26,33V59H18V43H16V59H8V33L5,43 1,42 6,24Z" />
              <circle cx="17" cy="11" r="10" />
            </g>
            <path d="M11,20H24L17,32Z" fill="#d5813c" />
          </svg>
        </button>
      </div>
      <a href="#google" className="absolute bottom-0 left-5 font-['Lato',sans-serif] text-[36px] leading-[56px] [-webkit-text-stroke:5px_white] [paint-order:stroke]">
        <span className="text-[#4285f4]">G</span>
        <span className="text-[#ea4335]">o</span>
        <span className="text-[#fbbc04]">o</span>
        <span className="text-[#4285f4]">g</span>
        <span className="text-[#34a853]">l</span>
        <span className="text-[#ea4335]">e</span>
      </a>
      <div className="absolute bottom-0 right-0 flex h-7 gap-0.5 font-['Roboto','Noto_Sans_CJK_JP',sans-serif] text-[20px] leading-7 text-black">
        <div className="flex gap-6 bg-[#f5f5f5]/70 px-2.5">
          <button>キーボード ショートカット</button>
          <span>地図データ ©2026</span>
        </div>
        <button className="flex items-center gap-2 bg-[#f5f5f5]/70 px-3.5">
          2 km
          <span className="h-3 w-[68px] border-x-4 border-b-4 border-black" />
        </button>
        <a href="#terms" className="bg-[#f5f5f5]/70 px-3.5">利用規約</a>
      </div>
    </>
  );
}

function BrandMark() {
  return (
    <svg viewBox="0 0 94 42" className="h-[42px] w-[94px]" aria-hidden="true">
      <path d="M44,3C20,5 0,15 0,27C0,36 12,41 31,41C20,38 14,35 14,29C14,20 28,9 44,3Z" fill="#1b3f96" />
      <path d="M52,23C62,24 72,20 79,17C70,27 54,37 35,41C42,36 47,31 52,23Z" fill="#1b3f96" />
      <path d="M47,3H62C61,8 57,12 51,13C49,10 48,6 47,3Z" fill="#d62a26" />
      <path d="M67,2L94,0C86,10 73,17 54,18C62,14 66,8 67,2Z" fill="#f2c141" />
    </svg>
  );
}

function Dot({ small, dark }: { small?: boolean; dark?: boolean }) {
  return (
    <span
      className={`flex shrink-0 items-center justify-center rounded-full ${small ? 'size-[30px]' : 'size-[60px]'} ${dark ? 'bg-[#609db4]' : 'bg-white'}`}
    >
      <span className={`rounded-full ${small ? 'size-1.5' : 'size-3'} ${dark ? 'bg-white' : 'bg-[#7cc3dc]'}`} />
    </span>
  );
}

function Header() {
  const button =
    'flex h-[70px] w-[306px] items-center rounded-full bg-linear-to-b from-[#87cde4] to-[#519fbf] pl-9 pr-7 text-[28px] font-bold text-white';
  return (
    <header className="fixed inset-x-10 top-8 z-10 flex h-[200px] items-center bg-[#fdfdfd]/75 pl-10 pr-[60px] backdrop-blur-[20px]">
      <a href="#top" className="flex items-center gap-4 text-[#333]">
        <BrandMark />
        <span className="flex items-center gap-3">
          <span className="font-['DejaVu_Sans',sans-serif] text-[44px] font-bold leading-none">Honda Cars</span>
          <span className="text-[40px] font-bold leading-none">中央神奈川</span>
        </span>
      </a>
      <div className="ml-auto flex flex-col items-end gap-7 pb-4">
        <div className="flex gap-5">
          <a href="#reserve" className={button}>
            <span className="flex-1 text-center">整備見積･予約</span>
            <Dot small />
          </a>
          <a href="#contact" className={button}>
            <span className="flex-1 text-center">各種お問合せ</span>
            <Dot small />
          </a>
        </div>
        <nav className="flex gap-[42px] pr-5 text-[29px] font-medium leading-10">
          {NAV_ITEMS.map((item) => (
            <a key={item} href="#nav">{item}</a>
          ))}
        </nav>
      </div>
      <button
        aria-label="メニュー"
        className="ml-[58px] flex size-[100px] flex-col items-center justify-center gap-3 rounded-2xl border-2 border-[#2f3034] bg-white"
      >
        <span className="h-1 w-12 bg-[#2f3034]" />
        <span className="h-1 w-12 bg-[#2f3034]" />
        <span className="h-1 w-12 bg-[#2f3034]" />
      </button>
    </header>
  );
}

function Backdrop() {
  return (
    <div className="pointer-events-none absolute inset-0 -z-10 overflow-hidden bg-[#fefefe]">
      <div className="absolute -left-[500px] top-[100px] size-[1000px] rounded-full bg-[radial-gradient(closest-side,#f3fcff,transparent)]" />
      <div className="absolute -right-[500px] top-[1400px] size-[1000px] rounded-full bg-[radial-gradient(closest-side,#f3fcff,transparent)]" />
      <div className="absolute -left-[500px] top-[2350px] size-[1000px] rounded-full bg-[radial-gradient(closest-side,#f3fcff,transparent)]" />
      <svg className="absolute inset-0 h-full w-full" aria-hidden="true">
        <filter id="grain" x="0" y="0" width="100%" height="100%">
          <feTurbulence type="fractalNoise" baseFrequency="0.22" numOctaves="3" seed="4" />
          <feColorMatrix values="0 0 0 0 0.8  0 0 0 0 0.8  0 0 0 0 0.8  2.8 0 0 0 -1.4" />
        </filter>
        <rect width="100%" height="100%" filter="url(#grain)" opacity="0.8" />
      </svg>
    </div>
  );
}

export default function App() {
  const [checked, setChecked] = useState<string[]>([]);
  const [open, setOpen] = useState(false);

  const toggle = (option: string) =>
    setChecked((prev) => (prev.includes(option) ? prev.filter((o) => o !== option) : [...prev, option]));

  return (
    <div className="relative isolate font-['Noto_Sans_CJK_JP',sans-serif] text-[#2f3034]">
      <Backdrop />
      <Header />
      <main className="mx-auto w-full max-w-[2400px] pb-[95px] pt-[166px]">
        <section>
          <h2 className="text-[65px] font-bold leading-[96px]">地図から探す</h2>
          <div className="mt-[62px] grid grid-cols-4 gap-5">
            {AREAS.map((area) => (
              <button
                key={area.label}
                className={`flex h-[120px] items-center rounded-full border-2 bg-linear-to-b from-white from-40% to-[#f4f4f4] pl-[68px] pr-[34px] text-[32px] ${area.style}`}
              >
                <span className="flex-1 whitespace-nowrap text-center">{area.label}</span>
                <svg viewBox="0 0 54 54" className="size-[54px] shrink-0" fill="none" stroke="currentColor" strokeWidth="3">
                  <circle cx="19" cy="19" r="17.500" />
                  <path d="M31.500,31.500L53,53M19,11V27M11,19H27" />
                </svg>
              </button>
            ))}
          </div>
          <div className="relative mt-[60px] overflow-hidden">
            <AreaMap />
            {PINS.map(([color, x, y]) => (
              <StorePin key={`${x}-${y}`} color={color} x={x} y={y} />
            ))}
            <MapControls />
          </div>
        </section>

        <section className="mt-[216px]">
          <h2 className="text-[65px] font-bold leading-[96px]">一覧・詳細条件から探す</h2>
          <form onSubmit={(e) => e.preventDefault()}>
            <div className="mt-[59px] rounded-2xl border-2 border-[#d9d9d9] bg-white px-20 pb-[73px] pt-20">
              <div className="flex flex-col gap-5">
                {FILTERS.map((filter) => (
                  <fieldset key={filter.title} className="flex items-center">
                    <legend className="float-left w-[240px] shrink-0 pb-2 text-[42px]">{filter.title}</legend>
                    <div className="grid flex-1 grid-cols-4 gap-10">
                      {filter.options.map((option) => (
                        <label
                          key={option}
                          className="flex h-[132px] items-center gap-[30px] rounded-2xl bg-[#f0f0f0] pl-[50px] text-[33px]"
                        >
                          <input
                            type="checkbox"
                            checked={checked.includes(option)}
                            onChange={() => toggle(option)}
                            className="size-8 appearance-none rounded-[5px] border-2 border-[#767676] bg-white checked:bg-[#609db4]"
                          />
                          {option}
                        </label>
                      ))}
                    </div>
                  </fieldset>
                ))}
              </div>
              <div className="mt-[46px] border-t-2 border-[#ccc] pt-[63px]">
                <button
                  type="button"
                  aria-expanded={open}
                  onClick={() => setOpen(!open)}
                  className="flex items-center gap-[68px] text-[42px] leading-[60px]"
                >
                  試乗車から探す
                  <svg viewBox="0 0 36 20" className="h-5 w-9" fill="none" stroke="#111" strokeWidth="3">
                    <path d="M1,1L18,18 35,1" />
                  </svg>
                </button>
              </div>
            </div>
            <div className="mt-[68px] flex justify-center gap-5 text-[32px] font-bold">
              <button
                type="reset"
                onClick={() => setChecked([])}
                className="flex h-[120px] w-[630px] items-center rounded-full border-2 border-[#609db4] bg-linear-to-b from-white from-20% to-[#f4f4f4] pl-11 pr-6 text-[#609db4]"
              >
                <span className="flex-1 text-center">絞り込み条件をクリア</span>
                <Dot dark />
              </button>
              <button
                type="submit"
                className="flex h-[120px] w-[630px] items-center rounded-full bg-linear-to-b from-[#87cde4] to-[#519fbf] pl-11 pr-6 text-white"
              >
                <span className="flex-1 text-center">この条件で検索する</span>
                <Dot />
              </button>
            </div>
          </form>
        </section>
      </main>
    </div>
  );
}
